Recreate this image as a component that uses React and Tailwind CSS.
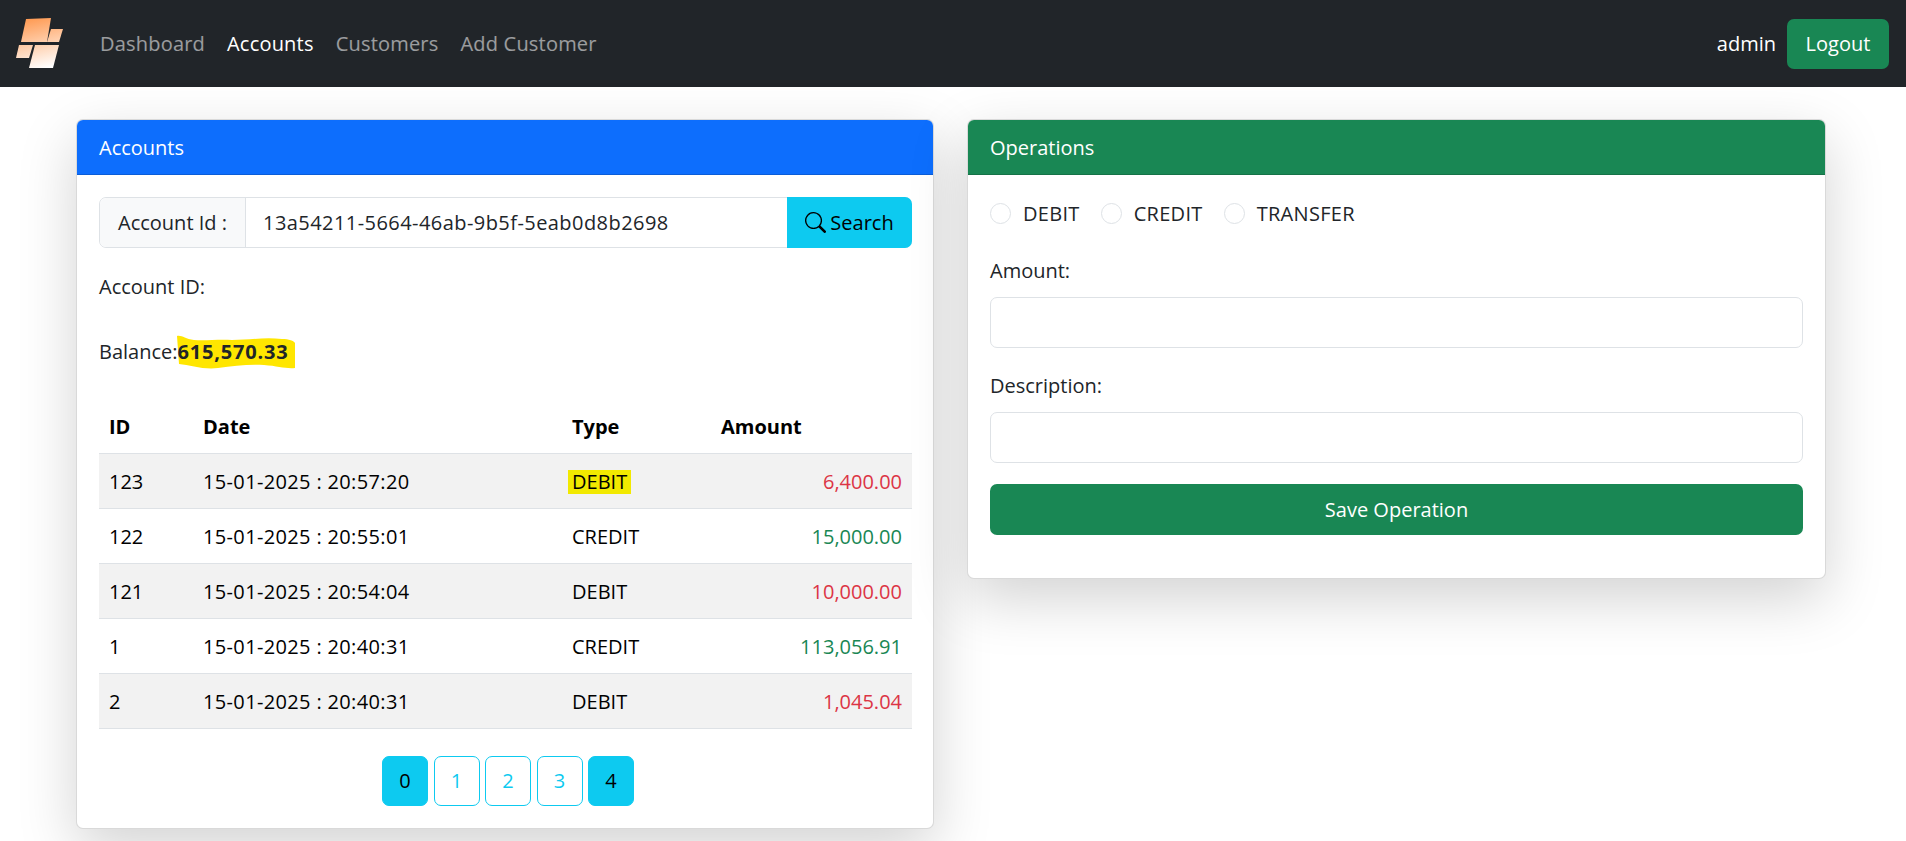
import { BsSearch } from "react-icons/bs";

const rows = [
  { id: "123", date: "15-01-2025 : 20:57:20", type: "DEBIT", amount: "6,400.00", mark: true },
  { id: "122", date: "15-01-2025 : 20:55:01", type: "CREDIT", amount: "15,000.00" },
  { id: "121", date: "15-01-2025 : 20:54:04", type: "DEBIT", amount: "10,000.00" },
  { id: "1", date: "15-01-2025 : 20:40:31", type: "CREDIT", amount: "113,056.91" },
  { id: "2", date: "15-01-2025 : 20:40:31", type: "DEBIT", amount: "1,045.04" },
];

function Logo() {
  return (
    <svg width="64" height="86" viewBox="0 0 64 86" className="block">
      <defs>
        <linearGradient id="logoFill" gradientUnits="userSpaceOnUse" x1="30" y1="17" x2="42" y2="68">
          <stop offset="0" stopColor="#ff9a52" />
          <stop offset="1" stopColor="#ffffff" />
        </linearGradient>
      </defs>
      <g fill="url(#logoFill)">
        <polygon points="26,18 51,17 47,41 21,41" />
        <polygon points="51,28 63,28 59,41 47,41" />
        <polygon points="19,44 33,44 29,57 16,57" />
        <polygon points="35,44 59,44 53,67 29,67" />
      </g>
    </svg>
  );
}

function Navbar() {
  return (
    <nav className="flex h-[87px] items-center bg-[#212529] pr-[17px]">
      <Logo />
      <div className="ml-9 flex gap-[22px] text-white/55 tracking-[0.2px]">
        <span>Dashboard</span>
        <span className="text-white">Accounts</span>
        <span>Customers</span>
        <span>Add Customer</span>
      </div>
      <span className="ml-auto text-white">admin</span>
      <button className="ml-[11px] h-[50px] w-[102px] rounded-[7px] bg-[#198754] text-white">Logout</button>
    </nav>
  );
}

function Card({ title, color, width, children }) {
  return (
    <section className={"self-start overflow-hidden rounded-[7px] border border-black/15 bg-white shadow-[0_20px_58px_rgba(0,0,0,0.175)] " + width}>
      <header className={"flex h-[55px] items-center border-b border-black/15 px-[22px] pt-[2px] text-white " + color}>{title}</header>
      {children}
    </section>
  );
}

function Balance() {
  return (
    <p className="mt-[35px] flex h-[30px] items-center">
      Balance:
      <span className="relative font-bold">
        <svg width="120" height="36" viewBox="0 0 120 36" className="absolute top-[-3px] left-[-2px]">
          <path
            d="M1 2 C6 1 9 5 18 6 C30 7 42 5 56 6 C72 6 88 3 106 5 C113 5 118 7 119 9 L119 34 C110 35 102 32 88 31 C72 30 58 32 42 34 C28 36 14 31 3 30 Z"
            fill="#ffe600"
          />
        </svg>
        <span className="relative tracking-[0.8px]">615,570.33</span>
      </span>
    </p>
  );
}

function AccountsCard() {
  return (
    <Card title="Accounts" color="bg-[#0d6efd]" width="w-[858px]">
      <div className="pt-[22px] pr-[21px] pb-[22px] pl-[22px]">
        <div className="flex h-[51px] rounded-[7px] border border-[#dee2e6]">
          <span className="flex w-[146px] items-center justify-center rounded-l-[7px] border-r border-[#dee2e6] bg-[#f8f9fa]">Account Id :</span>
          <input readOnly value="13a54211-5664-46ab-9b5f-5eab0d8b2698" className="min-w-0 flex-1 px-[17px] tracking-[0.44px] outline-none" />
          <button className="-my-px -mr-px flex w-[125px] items-center justify-center gap-1 rounded-r-[7px] bg-[#0dcaf0] text-black">
            <BsSearch size={21} />
            Search
          </button>
        </div>
        <p className="mt-[24px] flex h-[30px] items-center">Account ID:</p>
        <Balance />
        <table className="mt-[31px] w-full table-fixed border-collapse text-black">
          <colgroup>
            <col className="w-[94px]" />
            <col className="w-[369px]" />
            <col className="w-[149px]" />
            <col />
          </colgroup>
          <thead>
            <tr className="h-[55px] border-b border-[#dee2e6] text-left font-bold">
              <th className="px-2.5 pt-1">ID</th>
              <th className="px-2.5 pt-1">Date</th>
              <th className="px-2.5 pt-1">Type</th>
              <th className="px-2.5 pt-1">Amount</th>
            </tr>
          </thead>
          <tbody>
            {rows.map((r, i) => (
              <tr key={r.id} className={"h-[55px] border-b border-[#dee2e6] " + (i % 2 === 0 ? "bg-[#f2f2f2]" : "bg-white")}>
                <td className="px-2.5 pt-[3px]">{r.id}</td>
                <td className="px-2.5 pt-[3px] tracking-[0.35px]">{r.date}</td>
                <td className="px-2.5 pt-[3px]">
                  <span className={r.mark ? "-mx-1 inline-block h-6 bg-[#f2e900] px-1 leading-6" : ""}>{r.type}</span>
                </td>
                <td className={"px-2.5 pt-[3px] text-right " + (r.type === "DEBIT" ? "text-[#dc3545]" : "text-[#198754]")}>{r.amount}</td>
              </tr>
            ))}
          </tbody>
        </table>
        <div className="mt-[27px] flex justify-center gap-[5.5px] pl-[5px]">
          {["0", "1", "2", "3", "4"].map((n) => (
            <button
              key={n}
              className={
                "h-[50px] w-[46px] rounded-[7px] border border-[#0dcaf0] " +
                (n === "0" || n === "4" ? "bg-[#0dcaf0] text-black" : "bg-white text-[#0dcaf0]")
              }
            >
              {n}
            </button>
          ))}
        </div>
      </div>
    </Card>
  );
}

function Radio({ label }) {
  return (
    <label className="flex items-center gap-3">
      <input type="radio" name="op" className="size-[21px] appearance-none rounded-full border border-[#dee2e6] bg-white" />
      <span className="pt-px tracking-[0.3px]">{label}</span>
    </label>
  );
}

function OperationsCard() {
  return (
    <Card title="Operations" color="bg-[#198754]" width="w-[859px]">
      <div className="px-[22px] pt-[22px] pb-[22px]">
        <div className="mt-[5px] flex h-[22px] items-center gap-[21px]">
          <Radio label="DEBIT" />
          <Radio label="CREDIT" />
          <Radio label="TRANSFER" />
        </div>
        <label className="mt-[32px] block leading-[30px]">Amount:</label>
        <input className="mt-[11px] block h-[51px] w-full rounded-[7px] border border-[#dee2e6]" />
        <label className="mt-[23px] block leading-[30px]">Description:</label>
        <input className="mt-[11px] block h-[51px] w-full rounded-[7px] border border-[#dee2e6]" />
        <button className="mt-[21px] mb-[21px] block h-[51px] w-full rounded-[7px] bg-[#198754] pt-px text-white">Save Operation</button>
      </div>
    </Card>
  );
}

export default function App() {
  return (
    <div className="min-h-[841px] overflow-hidden bg-white font-['Open_Sans','Liberation_Sans',sans-serif] text-[20px] text-[#212529]">
      <Navbar />
      <main className="flex gap-[33px] pt-[32px] pl-[76px]">
        <AccountsCard />
        <OperationsCard />
      </main>
    </div>
  );
}
